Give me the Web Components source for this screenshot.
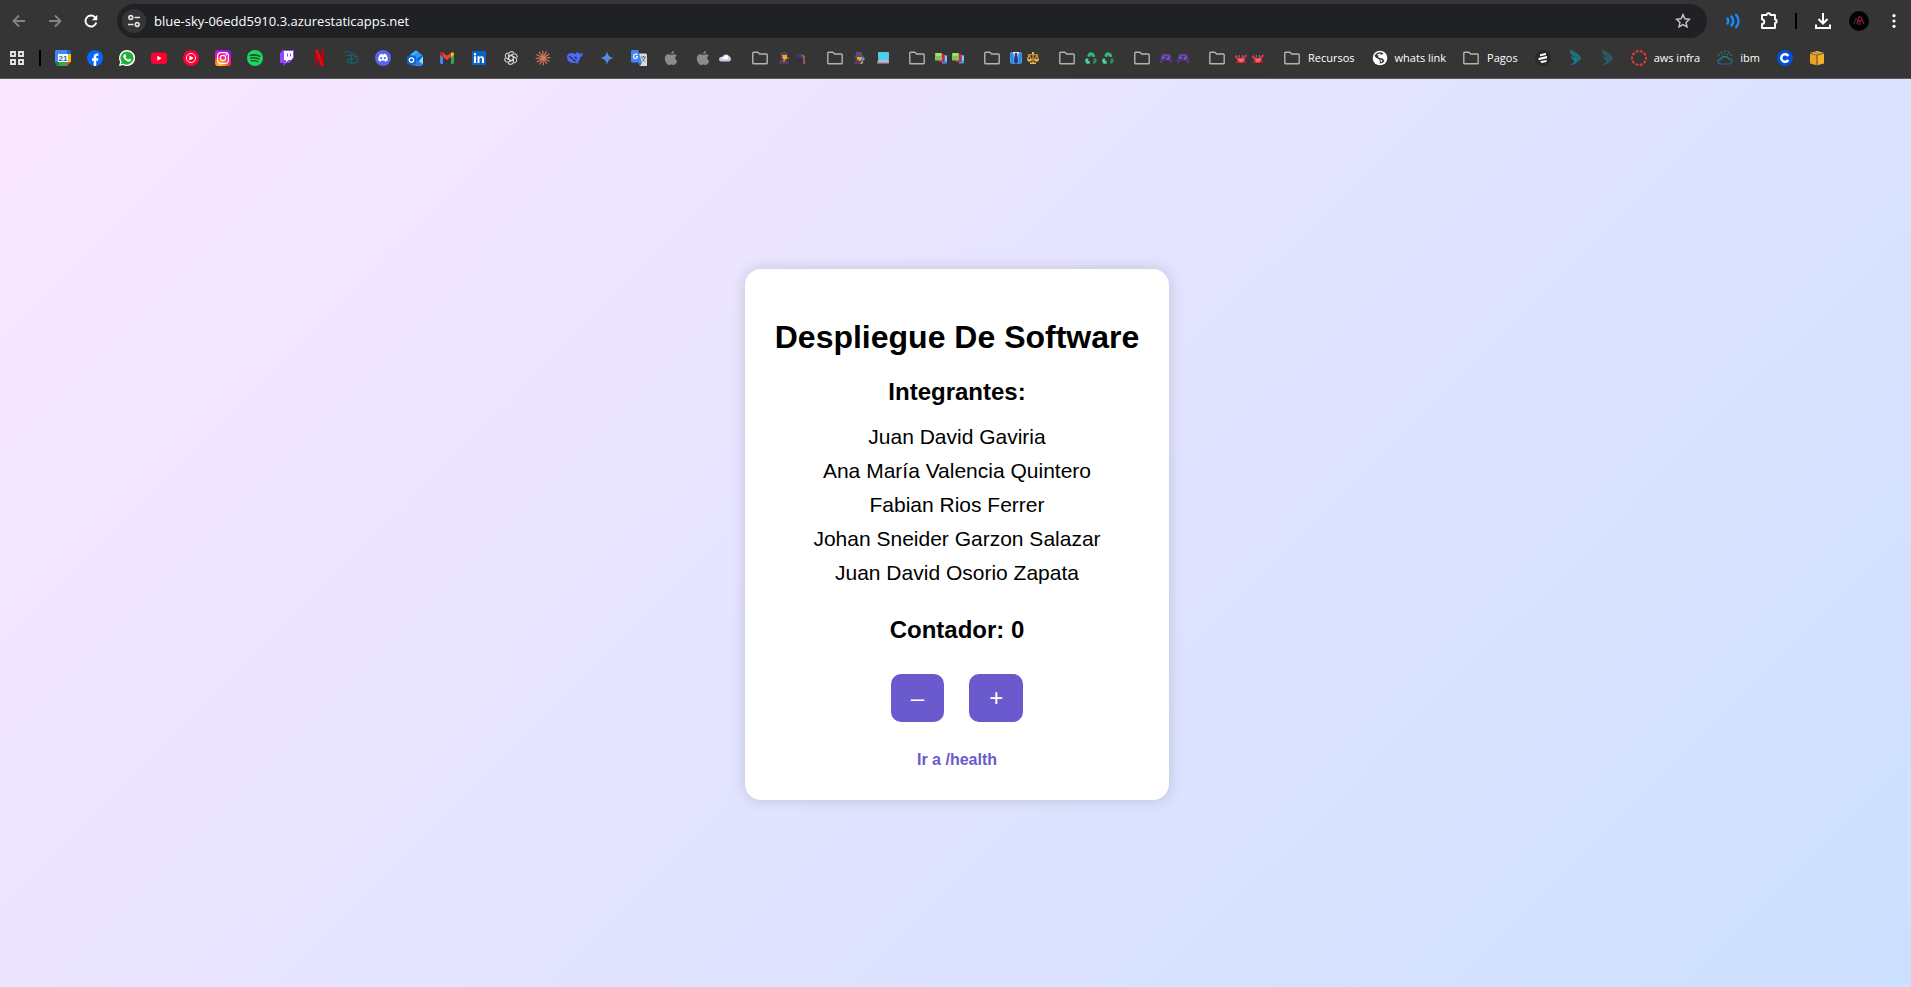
<!DOCTYPE html>
<html lang="es">
<head>
<meta charset="utf-8">
<title>Despliegue De Software</title>
<style>
html, body { height: 100%; margin: 0; }
body { font-family: "Liberation Sans", Arial, sans-serif; color: #000; }
</style>
</head>
<body>
<app-window>
  <browser-toolbar slot="chrome" url="blue-sky-06edd5910.3.azurestaticapps.net"></browser-toolbar>
  <bookmarks-bar slot="chrome"></bookmarks-bar>
  <team-card heading="Despliegue De Software">
    <li>Juan David Gaviria</li>
    <li>Ana María Valencia Quintero</li>
    <li>Fabian Rios Ferrer</li>
    <li>Johan Sneider Garzon Salazar</li>
    <li>Juan David Osorio Zapata</li>
    <click-counter slot="counter"></click-counter>
  </team-card>
</app-window>
<script>
const define = (name, html, setup) => {
  const template = document.createElement('template');
  template.innerHTML = html;
  customElements.define(name, class extends HTMLElement {
    connectedCallback() {
      if (this.shadowRoot) return;
      const root = this.attachShadow({ mode: 'open' });
      root.append(template.content.cloneNode(true));
      if (setup) setup(this, root);
    }
  });
};

const burst = (n, draw) => Array.from({ length: n }, (_, i) => `<g transform="rotate(${i * 360 / n} 8 8)">${draw}</g>`).join('');
const bird = '<path fill="BODY" d="M3 0c4 1 9 4 11 8-2 4-6 7-12 7 3-1 5-2 6-4C6 10 4 8 4 6l4 2C5 6 3 3 3 0z"/><path stroke="#353535" stroke-width=".6" fill="none" d="M5 2l7 6M5 5l6 4M9 12l4-2"/>';

const icons = {
  calendar: '<path fill="#fff" d="M3 3h10v10H3z"/><path fill="#4285f4" d="M1 0h12v4H4v8H0V1z"/><path fill="#1967d2" d="M12 0h3l1 1v3h-4z"/><path fill="#fbbc04" d="M12 4h4v8h-4z"/><path fill="#34a853" d="M4 12h8v4H4z"/><path fill="#188038" d="M0 12h4v4H1z"/><path fill="#ea4335" d="M12 12h4l-4 4z"/><path fill="#fff" d="M3 4h10v8H3z"/><text x="8" y="10.800" text-anchor="middle" font-family="Liberation Sans, sans-serif" font-weight="bold" font-size="8" fill="#1a5fc0">21</text>',
  facebook: '<circle cx="8" cy="8" r="8" fill="#0866ff"/><path fill="#fff" d="M6.700 16v-5.300H5V8.300h1.700V7c0-2.600 1.300-4 4.700-3.500v2.200c-1.600-.1-2.200 0-2.200 1.300v1.300h2.200l-.4 2.400H9.200V16z"/>',
  whatsapp: '<path fill="#fff" d="M8 0a8 8 0 1 1-3.800 15L0 16l1.100-4A8 8 0 0 1 8 0z"/><path fill="#20b038" d="M8 1.400a6.600 6.600 0 1 1-3.400 12.300L2 14.300l.7-2.500A6.600 6.600 0 0 1 8 1.400z"/><path fill="#fff" d="M5.600 4.200l.9.100.8 1.900-.8 1.100c.8 1.400 1.500 2 2.800 2.500l1-1.100 1.900.9c.1 1.400-1.400 2.300-2.600 2.100C7 11.200 4.600 8.700 4.200 6.400c0-1 .6-2 1.400-2.200z"/>',
  youtube: '<rect y="2.500" width="16" height="11.500" rx="3" fill="#ff0033"/><path fill="#fff" d="M6.300 5.700v5l4.300-2.500z"/>',
  ytmusic: '<circle cx="8" cy="8" r="8" fill="#ff0033"/><circle cx="8" cy="8" r="4.600" fill="none" stroke="#fff" stroke-width=".9"/><path fill="#fff" d="M6.400 5.400v5.200L10.800 8z"/>',
  instagram: '<defs><radialGradient id="ig" cx=".3" cy="1.050" r="1.150"><stop offset="0" stop-color="#ffdb3e"/><stop offset=".3" stop-color="#ff8a1d"/><stop offset=".55" stop-color="#ff1d6c"/><stop offset=".8" stop-color="#d60bd0"/><stop offset="1" stop-color="#7a1cff"/></radialGradient></defs><rect width="16" height="16" rx="3" fill="url(#ig)"/><g fill="none" stroke="#fff" stroke-width="1.200"><rect x="2.600" y="2.600" width="10.800" height="10.800" rx="3.200"/><circle cx="8" cy="8" r="2.700"/></g><circle cx="11.200" cy="4.800" r=".8" fill="#fff"/>',
  spotify: '<circle cx="8" cy="8" r="8" fill="#1ed760"/><g fill="none" stroke="#21472e" stroke-linecap="round"><path stroke-width="1.600" d="M3.300 5.400c3-.9 6.600-.6 9.400.9"/><path stroke-width="1.400" d="M3.700 8.200c2.700-.8 5.700-.5 8.200.9"/><path stroke-width="1.200" d="M4.200 10.900c2.300-.6 4.600-.3 6.700.8"/></g>',
  twitch: '<path fill="#9146ff" d="M4 0L1 3v10h3.500v3l3-3H10l5-5V0z"/><path fill="#fff" d="M5 1h9v6.500L12 10H9.500L7 12v-2H5z"/><path fill="#9146ff" d="M8 3.500h1v3H8zm3 0h1v3h-1z"/>',
  netflix: '<path fill="#b1060f" d="M4 0h3v16H4zm6 0h3v16h-3z"/><path fill="#e50914" d="M4 0h3l6 16h-3z"/>',
  disney: '<g fill="none" stroke="#17606f" stroke-linecap="round"><path stroke-width="1" d="M.5 2.500C4 .5 12 2 14 6"/><path stroke-width="1.300" d="M4 5.500c6-1 11 1 10.700 4.500-.4 4-10 4-10.500 1-.2-1.500 3-2.500 6-2"/><path stroke-width="1.400" d="M8.500 4.500L8 13"/></g>',
  discord: '<circle cx="8" cy="8" r="8" fill="#5865f2"/><path fill="#fff" d="M5 4.300l2-.5.4.7h1.200l.4-.7 2 .5c1.400 2 2 4.200 1.700 6.200l-2.400 1.300-.8-1.200H6.500l-.8 1.200-2.400-1.300C3 8.500 3.600 6.300 5 4.300z"/><circle cx="6.200" cy="8.100" r="1.100" fill="#5865f2"/><circle cx="9.800" cy="8.100" r="1.100" fill="#5865f2"/>',
  outlook: '<path fill="#1456c7" d="M2 5.500L9 .5l7 5V14l-1.500 1.500h-10L2 14z"/><path fill="#269bf5" d="M9 .5l6.500 4.700L9 9 3 5z"/><path fill="#4bb4ff" d="M3 5l6-4.500L11 2 5 6z"/><path fill="#6fdcff" d="M16 6v8l-1.500 1.500H8L16 6z"/><path fill="#2c7be8" d="M9 9l7 5.500-1.500 1H4.500z"/><rect y="5.500" width="9" height="9" rx="2" fill="#0f5fc9"/><circle cx="4.500" cy="10" r="2.200" fill="none" stroke="#fff" stroke-width="1.300"/>',
  gmail: '<path fill="#4285f4" d="M1 4l3 2.500V14H2l-1-1z"/><path fill="#34a853" d="M15 4l-3 2.500V14h2l1-1z"/><path fill="#ea4335" d="M1 4.500C1 2 3 2 4 2.800l4 3 4-3v4L8 9.900 1 5z"/><path fill="#fbbc04" d="M12 2.800c1.500-1.200 3-.4 3 1.200V5l-3 2.200z"/><path fill="#c5221f" d="M1 4.500C1 2 3 2 4 2.800v4.400L1 5z"/>',
  linkedin: '<rect x="1" y="1" width="14" height="14" rx="1" fill="#0a66c2"/><path fill="#fff" d="M3 6.300h2V13H3zM4 3a1.200 1.200 0 1 1 0 2.400A1.200 1.200 0 0 1 4 3zm2.500 3.300h2v1c1-1.700 4.500-1.700 4.500 1.500V13h-2V9.300c0-2-2.500-1.800-2.500 0V13h-2z"/>',
  openai: `<g fill="none" stroke="#d8d8d8" stroke-width="1.100">${burst(6, '<path d="M5.600 9.200V4.600c0-3.200 4-4 5.300-1.600M5.800 6.600L9.600 4.400"/>')}</g>`,
  claude: burst(12, '<path stroke="#d97757" stroke-width="1.200" d="M8 7L7.700.6"/>') + '<circle cx="8" cy="8" r="2.400" fill="#d97757"/>',
  deepseek: '<path fill="#4d6bfe" d="M0 7c0-3 3-4.500 6-3.800 1 .2 2 .9 3 .9 0-1.500 1-2 1.300-2.600.7 1.200 1 1.700 1.900 2.100 1.200.4 2.300-.2 3.300-1.100.4 2.500-.6 4-2.300 4.700-.2 2.400-1.200 3.800-2.700 4.800l1.700 1.200c-1.700.8-3.200.3-4.300-.4C3.500 13.500 0 11 0 7z"/><path fill="none" stroke="#353535" stroke-width="1.300" d="M2 6.500c3 0 4 5 7.200 4.600M7.500 7c1.500.1 2 1 2.200 2"/>',
  gemini: '<defs><linearGradient id="gm" x1="0" x2="1" y1="1" y2="0"><stop offset="0" stop-color="#6c9aa5"/><stop offset=".45" stop-color="#4d8de8"/><stop offset="1" stop-color="#668ae8"/></linearGradient></defs><path fill="url(#gm)" d="M8 1c.8 4.500 2.500 6.200 7 7-4.500.8-6.200 2.500-7 7-.8-4.500-2.500-6.200-7-7 4.500-.8 6.200-2.500 7-7z"/>',
  translate: '<path fill="#dadce0" d="M5 3.500h10l1 1V16H9z"/><path fill="#4285f4" d="M1 0h6l4 12.500H1l-1-1V1z"/><path fill="#3367d6" d="M6.500 12.500H11L9 16z"/><path fill="none" stroke="#fff" stroke-width="1.100" d="M6.500 4.700c-1.400-1.300-4-.2-4 1.700 0 2.700 4 2.800 4.100.2H4.800"/><path fill="none" stroke="#5f6368" stroke-width=".9" d="M10 7h5M12.500 6v1m1.300 0c-.3 2-1.300 3.500-2.500 4.500M11.500 8.500c.6 1.500 1.500 2.400 2.700 3"/>',
  apple: '<path fill="#8b8b8b" d="M11 1c.1 1.600-1.300 3.100-2.900 3.100C8 2.500 9.400 1.200 11 1zM8.300 5c.7 0 1.500-.8 2.900-.8 1 0 2 .5 2.600 1.400-2.300 1.400-1.900 4.500.5 5.400-.6 1.700-2 4-3.400 4-1 0-1.300-.6-2.500-.6s-1.600.6-2.500.6C4 15 1.800 11.300 1.800 8.500c0-2.700 1.700-4.200 3.500-4.200 1.300 0 2.200.7 3 .7z"/>',
  globe: '<circle cx="8" cy="8" r="7.300" fill="#fff"/><path fill="#3a3a3a" d="M2.500 6C3.500 3.500 6 2 8.500 2.200c2 .2 3 1 2.500 2L8 5 6 6.500l1 1.200 3.500.8 2 2.200c-.8 1.800-3 3-5 2.800L8 11.200l-1-2L4.500 8z"/><path fill="#fff" d="M5 4.500l3-1 1 .8L6.500 6zM8 9.500l2.500 1-1 1.700z"/>',
  bars: '<circle cx="8" cy="8" r="8" fill="#292929"/><path fill="#fff" d="M5 4.300l6-1.300v2L5 6.300zM3.500 8L12 6v2.200l-8.500 2zM5 11.300L11.500 10v2l-5 1z"/>',
  birdA: bird.replace('BODY', '#16818a'),
  birdB: bird.replace('BODY', '#2a5f70'),
  ring: '<circle cx="8" cy="8" r="7" fill="none" stroke="#e53b2e" stroke-width="2" stroke-dasharray="3 1.398" stroke-dashoffset="1.500"/>',
  weather: '<defs><linearGradient id="wt" x1="0" y1="0" x2="0" y2="1"><stop offset="0" stop-color="#1f8c80"/><stop offset="1" stop-color="#24629f"/></linearGradient></defs><path fill="none" stroke="url(#wt)" stroke-width="1.200" d="M4 14c-4-.2-4-4.800 0-4.800.7-3.400 6.300-3.400 7.500-.6 4.500.2 4.500 5.400.3 5.400z"/><path stroke="#1f8c80" stroke-width="1.200" stroke-linecap="round" d="M8 1v1M4 2l.5.9M12 2l-.5.9M1.300 4.600l.8.500M14.700 4.600l-.8.500M8 4v.1M5.500 4.700v.1M10.500 4.700v.1"/>',
  coin: '<circle cx="8" cy="8" r="8" fill="#0052d9"/><path fill="none" stroke="#fff" stroke-width="2.400" d="M11.300 6a3.800 3.800 0 1 0 0 4"/>',
  cube: '<path fill="#ffc24a" d="M1 3l7-2 7 2-7 2z"/><path fill="#e9a227" d="M1 3.500l6.700 1.700V15.300L1 13.400z"/><path fill="#f4af2d" d="M15 3.500L8.300 5.200v10.100l6.700-1.900z"/><path stroke="#7a5a21" stroke-width=".7" fill="none" d="M1 3.200l7 1.900 7-1.900M8 5v10.500M4.500 2l7 2"/>',
  folder: '<path fill="none" stroke="#b4b4b4" stroke-width="1.400" stroke-linejoin="round" d="M.8 3.200c0-.6.300-.9.9-.9h4.200L7.600 4h6.700c.6 0 .9.300.9.900v8c0 .5-.3.800-.9.800H1.700c-.6 0-.9-.3-.9-.8z"/>',
};

/* Small colour pictograms used as bookmark names, on a 12 x 12 grid. */
const glyphs = {
  cloud: '<path fill="#cfc6e8" d="M0 7.500C0 5 2.500 4.600 3.300 5 4 2 9 1.500 10 4.300c2.500.3 2.600 5 0 5.200H2.500C1 9.500 0 8.800 0 7.500z"/><path fill="#fff" d="M2 6.500C3 5 4.500 6 5 5c1-2 4-2.500 4.600 0L8 7.500z"/>',
  student: '<path fill="#4b3d63" d="M1 12V9.500L4 7h4l3 2.500V12z"/><path fill="#7b4a20" d="M3 2h6v5H3z"/><path fill="#f5a733" d="M4 2h5v4.500L7 8 5 7z"/><path fill="#54436d" d="M2 1.500L6 0l4 1.500V3H2z"/><path fill="#e3a33a" d="M8 5.500h3v1H8z"/><path fill="#c9792c" d="M5 8h2v2H5z"/>',
  cap: '<path fill="#463566" d="M0 3.500L6 1l6 3-6 3z"/><path fill="#382a55" d="M3 5.500l3 2 3-2v4H4z"/><path fill="none" stroke="#c8743a" stroke-width="1.300" d="M6.500 3.500l2.500 1V12"/>',
  detective: '<path fill="#4d4068" d="M1 12c0-3 2-4 5-4s5 1 5 4z"/><path fill="#7b4a20" d="M2.500 4h2v4.500h-2z"/><path fill="#f2a232" d="M3.500 4h5.500v3L7 9 4.500 8z"/><path fill="#5a4e78" d="M3 0h6v3l2 1v1H1V4l2-1z"/><circle cx="10" cy="7" r="1.700" fill="#3aa9e8"/><path stroke="#f2a232" stroke-width="1.500" d="M8 12l1.500-3"/>',
  laptop: '<rect x="1" y="0" width="11" height="8" rx="1" fill="#7db8cf"/><path fill="#3ed4f7" d="M2 1h9v6H2z"/><path fill="#9ba6ba" d="M1 8h11l1 3.500H0z"/><path fill="#cdd4df" d="M1.500 8.500h10v1h-10z"/>',
  books: '<path fill="#3c9edb" d="M7 3h5v8.500H7z"/><path fill="#80c8ee" d="M10 4h2v5h-2z"/><path fill="#d81b53" d="M4 2h5.500v8H4z"/><path fill="#7bc455" d="M0 1h7v7.500H0z"/><path fill="#a4dc72" d="M1 1h5v3H1z"/>',
  tie: '<rect width="12" height="12" rx="2" fill="#3b9cf0"/><path fill="#e4efff" d="M3 0h6L6 9z"/><path fill="#3e2b78" d="M5 1h2l1 9-2 2-2-2z"/><path stroke="#2369bd" stroke-width=".7" d="M2 2v10M10 2v10"/>',
  scales: '<path fill="none" stroke="#d99b36" stroke-width="1.200" d="M1 3.500c2-2 3 0 5-1 2 1 3-1 5 1M6 1v10M2 3.500L.5 7.500h4zM10 3.500L7.500 7.500h4z"/><path fill="#edb953" d="M0 7.500h5L4 9.500H1zM7 7.500h5l-1 2H8zM3 10.500h6V12H3zM5 0h2v2H5z"/>',
  recycle: '<g fill="none" stroke="#35bd83" stroke-width="2.700"><path d="M3.300 4.600L5 1.800h2l1 1.700"/><path stroke="#258d64" d="M9.500 6.500l1 2-1 1.700H8"/><path stroke="#49d695" d="M4.700 10.300H2.300L1.500 8.700l1-2"/></g><path fill="#35bd83" d="M6 4.500l4 .5-.5-3.500z"/>',
  gamepad: '<path fill="#58348e" d="M2 2.500h8c1 1 2 4.500 2 7.500 0 1.800-1.500 1.800-2.300.2L9 8.500H3l-.7 1.700C1.500 11.800 0 11.800 0 10 0 7 1 3.500 2 2.500z"/><path fill="#8059bd" d="M2.500 2.500h7v1h-7z"/><path fill="#55b8e8" d="M2.500 4.800h1.500v1.500H2.500z"/><circle cx="9" cy="5" r=".7" fill="#f267a0"/><circle cx="8" cy="6.700" r=".7" fill="#67ccea"/>',
  invader: '<path fill="#d82f55" d="M0 4l2-1 1 2 2 1 3-1 1-1 2-2 1 2-2 2v3l-2 2H4L2 9V7L0 6z"/><path fill="#ff6a4e" d="M4 6l2 1 2-1 1 2-2 2H5L3 8z"/><path stroke="#b5244c" stroke-width="1.200" fill="none" d="M1 11l2-2M11 11L9 9"/><path fill="#4a8fb8" d="M4 3h1v2H4zM7 3h1v2H7z"/>',
};

define('app-icon', `<style>
:host { display: block; flex: none; width: 16px; height: 16px; }
:host([glyph]) { width: 12px; height: 12px; }
svg { display: block; width: 100%; height: 100%; }
</style><svg aria-hidden="true"></svg>`, (el, root) => {
  const svg = root.querySelector('svg');
  const glyph = el.getAttribute('glyph');
  svg.setAttribute('viewBox', glyph ? '0 0 12 12' : '0 0 16 16');
  svg.innerHTML = glyph ? glyphs[glyph] : icons[el.getAttribute('name')];
});

define('app-window', `<style>
:host { display: flex; flex-direction: column; min-height: 100vh; }
header { background: #353535; border-bottom: 1px solid #5b5b5b; color: #fff; font-family: "Open Sans", "Noto Sans", sans-serif; }
main { flex: 1; display: flex; align-items: center; justify-content: center; padding: 3px 0 0 3px;
  background: linear-gradient(135deg, #fae7ff, #cce0ff); }
</style><header><slot name="chrome"></slot></header><main><slot></slot></main>`);

define('browser-toolbar', `<style>
:host { display: flex; align-items: center; height: 34px; padding: 4px 0 0 7px; }
button { display: grid; place-items: center; flex: none; width: 36px; height: 34px; padding: 0; border: 0; background: none; color: #fff; }
button[disabled] { color: #858585; }
button.slim { width: 24px; }
button.mid { width: 48px; }
svg { display: block; }
.address { flex: 1; display: flex; align-items: center; min-width: 0; height: 34px; margin: 0 8px 0 14px; padding-left: 5px; border-radius: 17px; background: #202125; }
.address button.site { width: 24px; height: 24px; border-radius: 12px; background: #353638; }
input { flex: 1; min-width: 0; height: 30px; padding: 0 0 0 8px; border: 0; outline: 0; background: none; color: #fff; font: 13px "Open Sans", "Noto Sans", sans-serif; }
.address button.star { width: 48px; color: #c7c7c7; }
.rule { width: 2px; height: 16px; margin: 0 8px; background: #000; }
button.menu { width: 34px; }
</style>
<button class="slim" disabled aria-label="Atrás"><svg width="16" height="16" viewBox="0 0 16 16" fill="none" stroke="currentColor" stroke-width="1.800"><path d="M14 8H3M8 2.500L2.500 8 8 13.500"/></svg></button>
<button class="mid" disabled aria-label="Adelante"><svg width="16" height="16" viewBox="0 0 16 16" fill="none" stroke="currentColor" stroke-width="1.800"><path d="M2 8h11M8 2.500L13.500 8 8 13.500"/></svg></button>
<button class="slim" aria-label="Recargar"><svg width="16" height="16" viewBox="0 0 16 16"><path fill="none" stroke="currentColor" stroke-width="1.900" d="M13.300 9.500A5.500 5.500 0 1 1 12 4.200L13.500 6"/><path fill="currentColor" d="M14.300 1.700v5.500H8.800z"/></svg></button>
<div class="address">
  <button class="site" aria-label="Información del sitio"><svg width="14" height="14" viewBox="0 0 14 14" fill="none" stroke="#e3e3e3" stroke-width="1.600"><circle cx="3.800" cy="3.500" r="1.900"/><path d="M7.500 3.500H13M1 10.500h5.500"/><circle cx="10.200" cy="10.500" r="1.900"/></svg></button>
  <input aria-label="Dirección">
  <button class="star" aria-label="Añadir a marcadores"><svg width="16" height="16" viewBox="0 0 16 16" fill="none" stroke="currentColor" stroke-width="1.400"><path d="M8 1.600l1.900 4.200 4.500.5-3.400 3.100 1 4.500L8 11.600l-4 2.300 1-4.500-3.400-3.100 4.500-.5z"/></svg></button>
</div>
<button aria-label="Lectura en voz alta"><svg width="16" height="16" viewBox="0 0 16 16" fill="none" stroke="#1090ff" stroke-width="2.400" stroke-linecap="round"><path d="M2.500 5.500c1 1.500 1 3.500 0 5M6.500 3.500c2 2.700 2 6.300 0 9M11 1.800c3.300 3.700 3.300 8.700 0 12.400"/></svg></button>
<button aria-label="Extensiones"><svg width="18" height="18" viewBox="0 0 18 18" fill="none" stroke="#fff" stroke-width="1.900" stroke-linejoin="round"><path d="M2 3h4.500c0-2.300 4-2.300 4 0H15v4.500c2.200 0 2.200 3.500 0 3.500v5H2v-4c3 0 3-4.500 0-4.500z"/></svg></button>
<span class="rule"></span>
<button aria-label="Descargas"><svg width="18" height="18" viewBox="0 0 18 18" fill="none" stroke="#fff" stroke-width="2"><path d="M9 1v10M4.500 7L9 11.500 13.500 7M2 12.500V16h14v-3.500"/></svg></button>
<button aria-label="Perfil"><svg width="20" height="20" viewBox="0 0 20 20"><circle cx="10" cy="10" r="10" fill="#030207"/><path fill="none" stroke="#30354f" d="M5 13l2-6 2 3v4"/><path fill="none" stroke="#81172b" stroke-width="1.300" d="M8 13l2-7h2l3 7M9 9.500h5M11 10v4"/></svg></button>
<button class="menu" aria-label="Menú"><svg width="16" height="16" viewBox="0 0 16 16" fill="#fff"><circle cx="8" cy="2.700" r="1.600"/><circle cx="8" cy="8" r="1.600"/><circle cx="8" cy="13.300" r="1.600"/></svg></button>`,
(el, root) => { root.querySelector('input').value = el.getAttribute('url'); });

define('bookmarks-bar', `<style>
:host { display: block; height: 40px; }
nav { display: flex; align-items: center; gap: 16px; height: 40px; padding-left: 9px; overflow: hidden; }
button { display: block; flex: none; width: 16px; height: 16px; padding: 0; border: 0; background: none; }
svg { display: block; }
.rule { flex: none; width: 2px; height: 16px; margin: 0 -2px; background: #000; }
a { display: flex; flex: none; align-items: center; gap: 7px; height: 24px; color: #fff; text-decoration: none; font-size: 11px; line-height: 16px; white-space: nowrap; }
a.folder { gap: 8px; }
a.pictures { gap: 10px; padding-right: 4px; }
a.cloud { gap: 8px; padding-right: 5px; }
.label { padding-right: 1px; }
.pair { display: flex; gap: 5px; }
.pair.wide { gap: 12px; }
</style><nav aria-label="Marcadores">
<button aria-label="Grupos"><svg width="16" height="16" viewBox="0 0 16 16" fill="none" stroke="#e3e3e3" stroke-width="1.900"><path d="M2 2h4v4H2zM10 2h4v4h-4zM2 10h4v4H2zM10 10h4v4h-4z"/></svg></button>
<span class="rule"></span></nav>`, (el, root) => {
  const nav = root.querySelector('nav');
  const add = (cls, label, body) => {
    const a = document.createElement('a');
    a.href = '#';
    if (cls) a.className = cls;
    if (label) a.setAttribute('aria-label', label);
    a.innerHTML = body;
    nav.append(a);
  };
  const icon = n => `<app-icon name="${n}"></app-icon>`;
  const glyph = n => `<app-icon glyph="${n}"></app-icon>`;
  const text = t => `<span class="label">${t}</span>`;
  ['calendar', 'facebook', 'whatsapp', 'youtube', 'ytmusic', 'instagram', 'spotify', 'twitch', 'netflix', 'disney', 'discord',
   'outlook', 'gmail', 'linkedin', 'openai', 'claude', 'deepseek', 'gemini', 'translate', 'apple'].forEach(n => add('', n, icon(n)));
  add('cloud', 'icloud', icon('apple') + glyph('cloud'));
  [['student', 'cap'], ['detective', 'laptop'], ['books', 'books'], ['tie', 'scales'], ['recycle', 'recycle'], ['gamepad', 'gamepad'], ['invader', 'invader']]
    .forEach(([a, b]) => add('folder pictures', a, icon('folder') + `<span class="pair${b === 'laptop' ? ' wide' : ''}">${glyph(a)}${glyph(b)}</span>`));
  add('folder', '', icon('folder') + text('Recursos'));
  add('', '', icon('globe') + text('whats link'));
  add('folder', '', icon('folder') + text('Pagos'));
  ['bars', 'birdA', 'birdB'].forEach(n => add('', n, icon(n)));
  add('', '', icon('ring') + text('aws infra'));
  add('', '', icon('weather') + text('ibm'));
  ['coin', 'cube'].forEach(n => add('', n, icon(n)));
});

define('team-card', `<style>
:host { display: block; box-sizing: border-box; padding: 30px; border-radius: 16px; background: #fff; text-align: center; box-shadow: 0 0 15px rgba(0, 0, 0, .15); }
h1 { margin: 20px 0 22px; font-size: 32px; line-height: 37px; }
h2 { margin: 0; font-size: 24px; line-height: 28px; }
ul { margin: 14px 0 26px; padding: 0; list-style: none; }
::slotted(li) { font-size: 21px; line-height: 24px; padding: 5px 0; }
.health { display: block; margin-top: 28px; color: #6a5acd; font-size: 16px; font-weight: bold; line-height: 20px; text-decoration: none; }
</style>
<h1></h1><h2>Integrantes:</h2><ul><slot></slot></ul><slot name="counter"></slot>
<a class="health" href="/health">Ir a /health</a>`,
(el, root) => { root.querySelector('h1').textContent = el.getAttribute('heading'); });

define('click-counter', `<style>
:host { display: block; }
h2 { margin: 0; font-size: 24px; line-height: 28px; }
div { display: flex; justify-content: center; gap: 25px; margin-top: 30px; }
button { padding: 12px 20px; border: 0; border-radius: 10px; background: #6a5acd; color: #fff; font: 24px/24px "Liberation Sans", Arial, sans-serif; cursor: pointer; }
</style><h2>Contador: <output>0</output></h2><div><button>–</button><button>+</button></div>`,
(el, root) => {
  const out = root.querySelector('output');
  const [minus, plus] = root.querySelectorAll('button');
  minus.onclick = () => out.value = Number(out.value) - 1;
  plus.onclick = () => out.value = Number(out.value) + 1;
});
</script>
</body>
</html>
